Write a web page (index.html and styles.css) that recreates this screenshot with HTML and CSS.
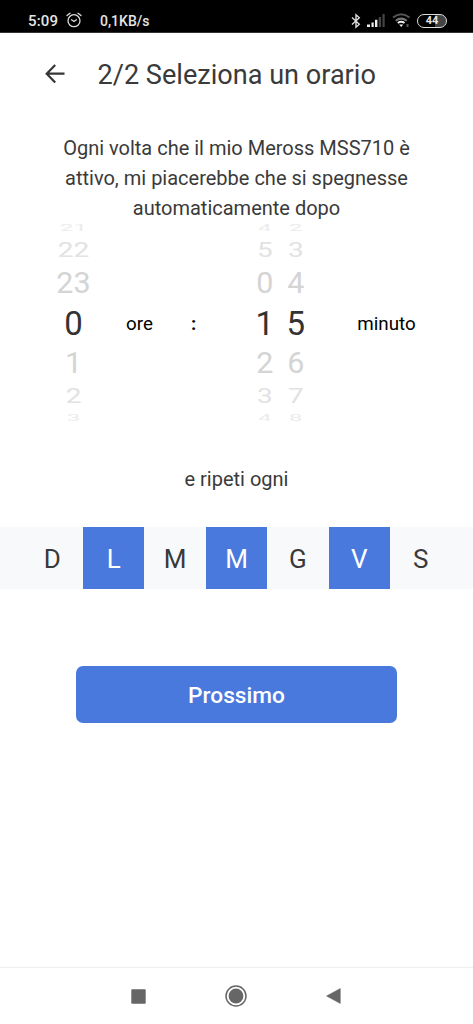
FILE: index.html
```html
<!DOCTYPE html>
<html lang="it">
<head>
<meta charset="utf-8">
<title>Seleziona un orario</title>
<link rel="stylesheet" href="styles.css">
</head>
<body>
<div class="screen">
  <div class="status">
    <span class="clock">5:09</span>
    <svg class="alarm" width="16" height="16" viewBox="0 0 16 16" fill="none" stroke="#ddd" stroke-width="1.3" stroke-linecap="round"><circle cx="8" cy="8.7" r="6"/><path d="M1 3.6 4 1.2M15 3.6 12 1.2M5.5 7.8 8 9.5 10.4 7.8"/></svg>
    <span class="rate">0,1KB/s</span>
    <div class="indicators">
      <svg width="10" height="16" viewBox="0 0 10 16" fill="none" stroke="#ddd" stroke-width="1.4"><path d="M1 4.5 8.3 11.3 5 14.2V1.8L8.3 4.8 1 11.5"/></svg>
      <svg class="signal" width="19" height="15" viewBox="0 0 19 15"><path fill="#eee" d="M0 11.5h3V14H0zM4.500 9.500h2.200V14H4.500zM8 6.800h2.400V14H8z"/><path fill="#444" d="M11.700 4h2.400v10h-2.400zM15.500 1h2.200v13h-2.200z"/></svg>
      <svg class="wifi" width="19" height="15" viewBox="0 0 19 15" fill="none"><path d="M1 4.600Q9.200-2.200 17.500 4.600" stroke="#555" stroke-width="2"/><path d="M3.700 7.800Q9.200 3.500 14.800 7.800" stroke="#777" stroke-width="2"/><path d="M5.800 10Q9.200 7.600 12.500 10" stroke="#eee" stroke-width="2"/><path d="M7.200 11.500h4L9.200 14z" fill="#eee"/><path d="M14.500 11h2v3h-2z" fill="#555"/></svg>
      <span class="battery">44</span>
    </div>
  </div>

  <header class="header">
    <svg width="20" height="20" viewBox="0 0 20 20" fill="none" stroke="#363636" stroke-width="2.2"><path d="M19.500 9.700H1.500M10.200 1 1.700 9.700 10.200 18.500"/></svg>
    <h1 class="title">2/2 Seleziona un orario</h1>
  </header>

  <p class="intro">Ogni volta che il mio Meross MSS710 è<br>attivo, mi piacerebbe che si spegnesse<br>automaticamente dopo</p>

  <div class="picker">
    <div class="wheel hours">
      <div class="row far"><span>21</span></div>
      <div class="row mid"><span>22</span></div>
      <div class="row near"><span>23</span></div>
      <div class="row current"><span>0</span></div>
      <div class="row near after"><span>1</span></div>
      <div class="row mid after"><span>2</span></div>
      <div class="row far"><span>3</span></div>
    </div>
    <span class="unit ore">ore</span>
    <span class="unit colon">:</span>
    <div class="wheel tens">
      <div class="row far"><span>4</span></div>
      <div class="row mid"><span>5</span></div>
      <div class="row near"><span>0</span></div>
      <div class="row current"><span>1</span></div>
      <div class="row near after"><span>2</span></div>
      <div class="row mid after"><span>3</span></div>
      <div class="row far"><span>4</span></div>
    </div>
    <div class="wheel ones">
      <div class="row far"><span>2</span></div>
      <div class="row mid"><span>3</span></div>
      <div class="row near"><span>4</span></div>
      <div class="row current"><span>5</span></div>
      <div class="row near after"><span>6</span></div>
      <div class="row mid after"><span>7</span></div>
      <div class="row far"><span>8</span></div>
    </div>
    <span class="unit minuto">minuto</span>
  </div>

  <p class="repeat">e ripeti ogni</p>

  <div class="days">
    <span class="day">D</span>
    <span class="day on">L</span>
    <span class="day">M</span>
    <span class="day on">M</span>
    <span class="day">G</span>
    <span class="day on">V</span>
    <span class="day">S</span>
  </div>

  <button class="next">Prossimo</button>

  <nav class="nav">
    <svg width="15" height="15" viewBox="0 0 15 15"><rect x=".3" y=".3" width="14.400" height="14.400" rx=".8" fill="#666"/></svg>
    <svg width="22" height="22" viewBox="0 0 22 22"><circle cx="11" cy="11" r="10" fill="none" stroke="#666" stroke-width="1.500"/><circle cx="11" cy="11" r="7.400" fill="#666"/></svg>
    <svg width="15" height="16" viewBox="0 0 15 16"><path d="M14.300.5v15L.5 8z" fill="#666" stroke="#666" stroke-width=".5" stroke-linejoin="round"/></svg>
  </nav>
</div>
</body>
</html>
```

FILE: styles.css
```css
* { box-sizing: border-box; }
body { margin: 0; background: #fff; font-family: Roboto, sans-serif; color: #3a3a3a; }
.screen { width: 473px; height: 1024px; display: flex; flex-direction: column; overflow: hidden; }

.status { flex: none; height: 33px; background: #000; border-bottom: 1px solid #333; color: #e4e4e4; display: flex; align-items: center; padding: 9px 26px 0 28px; }
.clock { font-size: 15px; font-weight: 500; width: 38px; letter-spacing: .15px; }
.alarm { margin-top: -1px; }
.rate { font-size: 14px; font-weight: 500; margin-left: 18px; }
.indicators { margin-left: auto; display: flex; align-items: center; }
.signal { margin-left: 6px; }
.wifi { margin-left: 6px; }
.battery { width: 30px; height: 14px; margin-left: 6px; border: 1.5px solid #ddd; border-radius: 7px; background: linear-gradient(90deg, #000 60%, #444 60%); font-size: 11px; font-weight: 700; line-height: 12px; text-align: center; }

.header { flex: none; height: 84px; padding-left: 44.5px; display: flex; align-items: center; }
.header svg { flex: none; margin-top: -3px; }
.title { margin: 0 0 0 33px; font-size: 27.1px; font-weight: 400; white-space: nowrap; }

.intro { flex: none; margin: 16px 0 0; text-align: center; font-size: 20px; line-height: 30px; white-space: nowrap; height: 91px; }

.picker { flex: none; height: 198px; display: flex; align-items: center; padding-left: 43px; }
.wheel { text-align: center; }
.hours { width: 61px; }
.tens { width: 31px; margin-left: 53px; }
.ones { width: 31px; }
.row { display: flex; align-items: center; justify-content: center; color: #d4d4d4; }
.row span { line-height: 1; }
.far { height: 8px; font-size: 24px; color: #ececec; }
.far span { transform: scaleY(.4); }
.mid { height: 36px; font-size: 28px; color: #e2e2e2; }
.mid span { transform: scaleY(.74); }
.near { height: 31px; font-size: 30.5px; }
.near span { transform: scaleY(.97); }
.current { height: 49px; font-size: 33px; color: #333; }
.near.after { height: 30px; }
.unit { font-size: 18.8px; color: #000; margin-top: 2px; }
.ore { margin-left: 22px; width: 65px; }
.colon { font-weight: 700; }
.minuto { margin-left: 46px; }

.repeat { flex: none; margin: 42px 0 0; text-align: center; font-size: 20px; line-height: 30px; }

.days { flex: none; margin-top: 33px; height: 62px; background: #f8f9fb; display: flex; justify-content: center; }
.day { width: 61.4px; font-size: 26px; display: flex; align-items: center; justify-content: center; padding-top: 2px; }
.on { background: #4a79dd; color: #fff; }

.next { flex: none; align-self: center; margin: 77px 0 0; width: 321px; height: 57px; padding: 1px 0 0; border: 0; border-radius: 7px; background: #4a79dd; color: #fff; font: 500 22.7px Roboto, sans-serif; }

.nav { flex: none; margin-top: auto; height: 57px; border-top: 1px solid #eee; display: flex; align-items: center; justify-content: space-between; padding: 0 132px 0 131px; }
```
